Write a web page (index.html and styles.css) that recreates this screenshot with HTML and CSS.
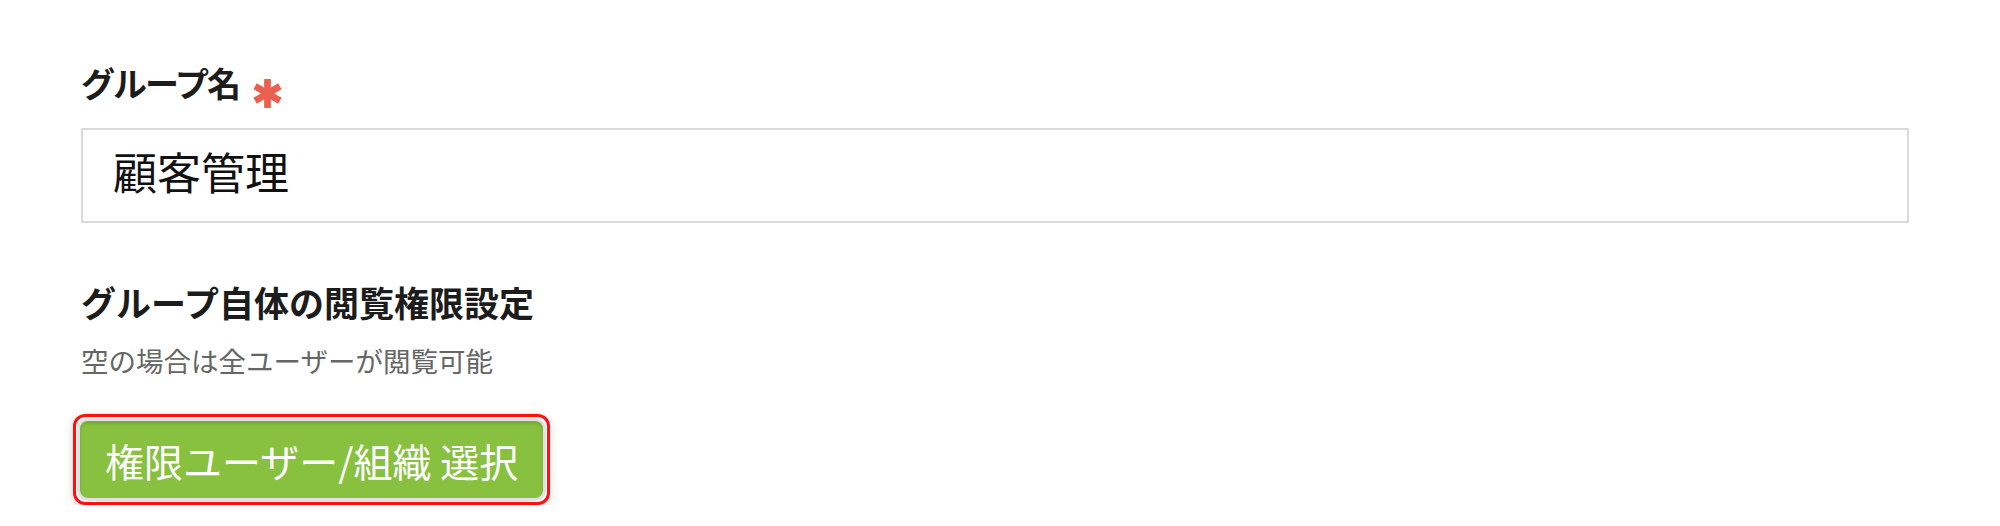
FILE: index.html
```html
<!DOCTYPE html>
<html lang="ja">
<head>
    <meta charset="UTF-8">
    <title>グループ設定</title>
    <link rel="stylesheet" href="styles.css">
</head>
<body>

<div class="form">
    <div class="field-label first">
        <span class="label-text">グループ名</span>
        <svg class="required" width="29" height="31" viewBox="0 0 28 30">
            <g stroke="#ea5f4e" stroke-width="6.5" stroke-linecap="butt">
                <line x1="14" y1="1" x2="14" y2="29"/>
                <line x1="2" y1="8" x2="26" y2="22"/>
                <line x1="2" y1="22" x2="26" y2="8"/>
            </g>
        </svg>
    </div>
    <input class="text-input" type="text" value="顧客管理">

    <div class="field-label second">グループ自体の閲覧権限設定</div>
    <div class="help">空の場合は全ユーザーが閲覧可能</div>

    <div class="highlight">
        <button class="select-btn">権限ユーザー/組織 選択</button>
    </div>
</div>

</body>
</html>
```

FILE: styles.css
```css
body {
    margin: 0;
    background: #ffffff;
    font-family: "Noto Sans CJK JP", "Noto Sans", sans-serif;
    color: #1c1c1c;
}

.form {
    width: 1828px;
    padding: 61px 0 0 81px;
}

.field-label {
    font-size: 35px;
    line-height: 40px;
    font-weight: bold;
}

.field-label.first {
    display: flex;
    align-items: flex-start;
    height: 40px;
    font-size: 34px;
    letter-spacing: -2px;
    margin-bottom: 27px;
}

.label-text {
    padding-top: 2px;
}

.field-label.second {
    margin-top: 59px;
    margin-bottom: 21px;
}

.required {
    flex-shrink: 0;
    margin: 17px 0 0 14px;
}

.text-input {
    display: block;
    box-sizing: border-box;
    width: 100%;
    height: 95px;
    padding: 0 30px 9px 30px;
    border: 2px solid #dadada;
    font-family: inherit;
    font-size: 44px;
    color: #111;
    outline: none;
}

.help {
    font-size: 27.5px;
    line-height: 34px;
    color: #666;
}

.highlight {
    display: inline-block;
    margin: 37px 0 0 -8px;
    padding: 4px;
    border: 3px solid #ff1010;
    border-radius: 12px;
    box-shadow: 0 2px 8px rgba(0, 0, 0, 0.18);
}

.select-btn {
    display: block;
    height: 77px;
    padding: 0 25px;
    background: #87c13f;
    border: none;
    border-radius: 8px;
    box-shadow: 0 0 0 3px #e2e2e2, inset 0 3px 3px rgba(0, 0, 0, 0.12);
    font-family: inherit;
    font-size: 39px;
    color: #ffffff;
    cursor: pointer;
}
```
